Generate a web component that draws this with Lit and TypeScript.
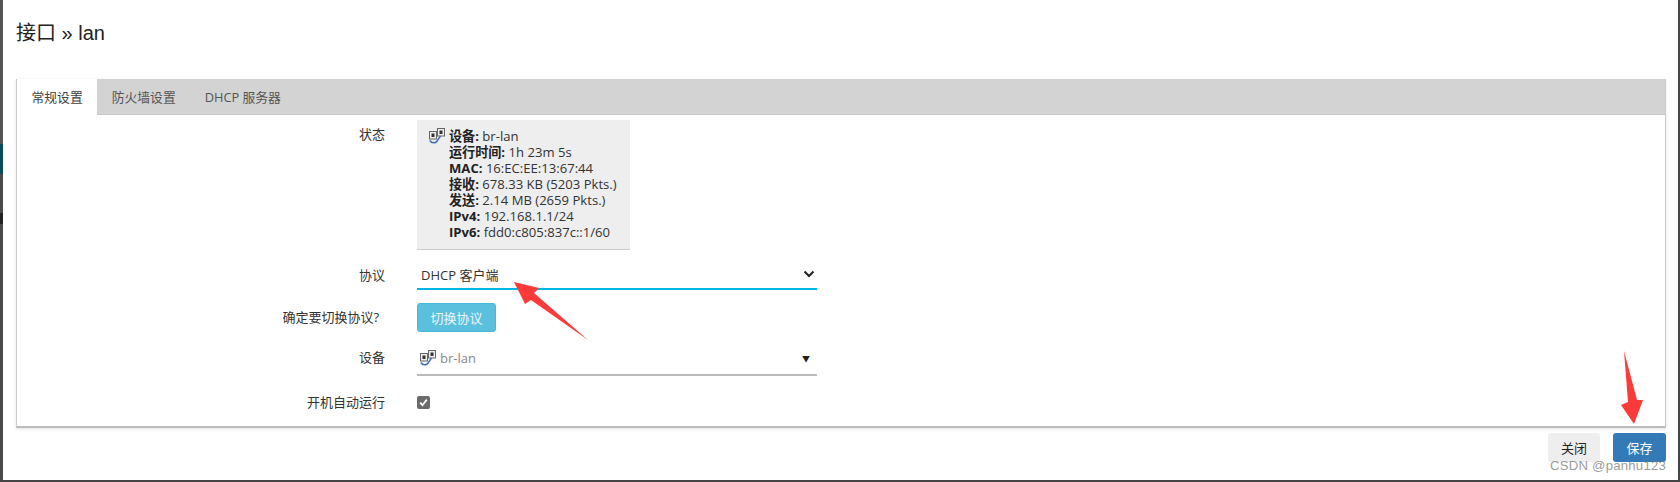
import { LitElement, html, css, svg } from "lit";
import { customElement } from "lit/decorators.js";

const netIcon = (cls: string) => html`<svg class=${cls} viewBox="0 0 16 16" width="16" height="16">
  <rect x="0.5" y="3.5" width="7" height="7.5" fill="#eee" stroke="#666" stroke-width="1"/>
  <rect x="2.5" y="5.5" width="3" height="3.5" fill="#333"/>
  <rect x="8.5" y="0.5" width="7" height="7.5" fill="#eee" stroke="#666" stroke-width="1"/>
  <rect x="10.5" y="2.5" width="3" height="3.5" fill="#333"/>
  <path d="M0.8 12.5 C3 16 7.5 15.5 9 11.5 L11.5 8" fill="none" stroke="#3d6fb4" stroke-width="1.5"/>
</svg>`;

const statusRows: [string, string][] = [
  ["设备:", "br-lan"],
  ["运行时间:", "1h 23m 5s"],
  ["MAC:", "16:EC:EE:13:67:44"],
  ["接收:", "678.33 KB (5203 Pkts.)"],
  ["发送:", "2.14 MB (2659 Pkts.)"],
  ["IPv4:", "192.168.1.1/24"],
  ["IPv6:", "fdd0:c805:837c::1/60"],
];

@customElement("app-root")
export class AppRoot extends LitElement {
  static styles = css`
    :host {
      display: block;
      width: 1680px;
      height: 482px;
      font-family: "Open Sans", "Noto Sans CJK SC", sans-serif;
      font-size: 13px;
      color: #404040;
      background: #fff;
      overflow: hidden;
      position: relative;
    }
    .frame {
      display: flex;
      height: 480px;
      border-bottom: 2px solid #444;
      border-right: 2px solid #444;
    }
    .backdrop {
      width: 3px;
      flex: none;
      background: linear-gradient(
        #555 0 144px,
        #0a4a55 144px 174px,
        #4a4a4a 174px 213px,
        #222 213px 224px,
        #4a4a4a 224px
      );
    }
    .modal {
      flex: 1;
      min-width: 0;
      padding: 0 12px 0 13px;
      display: flex;
      flex-direction: column;
    }
    h3 {
      margin: 0;
      padding-top: 20px;
      height: 59px;
      box-sizing: border-box;
      font-size: 20px;
      line-height: 27px;
      font-weight: 400;
      color: #222;
      font-family: "Liberation Sans", "Noto Sans CJK SC", sans-serif;
    }
    .panel {
      margin-top: 20px;
      height: 349px;
      box-sizing: border-box;
      border: 1px solid #ccc;
      border-bottom: 2px solid #bbb;
      border-top: 0;
      display: flex;
      flex-direction: column;
      box-shadow: 0 1px 3px rgba(0, 0, 0, 0.12);
    }
    .tabs {
      display: flex;
      height: 36px;
      background: #d3d3d3;
      flex: none;
      border-bottom: 1px solid #c8c8c8;
      box-sizing: border-box;
    }
    .tab {
      padding: 0 14.5px;
      line-height: 36px;
      font-size: 12.8px;
      color: #555;
    }
    .tab.active {
      background: #fff;
      color: #404040;
      height: 36px;
    }
    .body {
      display: grid;
      grid-template-columns: 368px 400px;
      column-gap: 32px;
      padding-top: 5px;
    }
    .label {
      text-align: right;
      font-size: 13px;
      color: #333;
    }
    .status {
      background: #eee;
      border-bottom: 1px solid #ccc;
      height: 130px;
      width: 213px;
      padding: 8px 0 0 12px;
      box-sizing: border-box;
      display: flex;
      gap: 4px;
      line-height: 16px;
      font-size: 13.1px;
      color: #333;
    }
    .status b { font-weight: 700; color: #222; }
    .status-icon { flex: none; }
    .lbl-status { line-height: 30px; height: 130px; margin-top: -1px; }
    .lbl-proto { margin-top: 10px; line-height: 30px; height: 30px; }
    .select {
      margin-top: 10px;
      height: 30px;
      box-sizing: border-box;
      border-bottom: 2px solid #00b5e2;
      display: flex;
      align-items: center;
      justify-content: space-between;
      padding: 0 2px 0 4px;
      color: #333;
    }
    .lbl-switch { margin-top: 13px; line-height: 28px; padding-right: 6px; }
    .btn-wrap { margin-top: 13px; }
    .btn {
      display: flex;
      align-items: center;
      justify-content: center;
      border-radius: 3px;
      font-size: 13px;
      box-sizing: border-box;
    }
    .btn-info {
      width: 79px;
      height: 29px;
      background: #5bc0de;
      border: 1px solid #46b8da;
      color: #eaf6fa;
    }
    .lbl-dev { margin-top: 10px; line-height: 30px; }
    .device {
      margin-top: 10px;
      height: 34px;
      box-sizing: border-box;
      border-bottom: 2px solid #bbb;
      display: flex;
      align-items: center;
      padding: 0 7px 0 3px;
      gap: 4px;
      color: #888;
    }
    .device .caret { margin-left: auto; color: #222; font-size: 8px; }
    .lbl-auto { margin-top: 13px; line-height: 26px; }
    .check-row { margin-top: 13px; height: 26px; display: flex; align-items: center; }
    .check {
      width: 13px;
      height: 13px;
      border-radius: 2px;
      background: #6b6b6b;
      display: flex;
      align-items: center;
      justify-content: center;
    }
    .footer {
      display: flex;
      justify-content: flex-end;
      gap: 13px;
      padding-top: 5px;
    }
    .btn-close {
      width: 52px;
      height: 29px;
      background: #eee;
      color: #222;
    }
    .btn-save {
      width: 53px;
      height: 29px;
      background: #337ab7;
      color: #fff;
    }
    .overlay {
      position: absolute;
      left: 0;
      top: 0;
      width: 1680px;
      height: 482px;
      pointer-events: none;
    }
    .mark {
      position: absolute;
      right: 14px;
      bottom: 9px;
      font-family: "Liberation Sans", sans-serif;
      font-size: 13.2px;
      line-height: 14px;
      letter-spacing: 0.2px;
      color: rgba(120, 120, 120, 0.75);
    }
  `;

  render() {
    return html`
      <div class="frame">
        <div class="backdrop"></div>
        <div class="modal">
          <h3>接口 » lan</h3>
          <div class="panel">
            <div class="tabs">
              <div class="tab active">常规设置</div>
              <div class="tab">防火墙设置</div>
              <div class="tab">DHCP 服务器</div>
            </div>
            <div class="body">
              <div class="label lbl-status">状态</div>
              <div class="status">
                ${netIcon("status-icon")}
                <div>
                  ${statusRows.map(([k, v]) => html`<div><b>${k}</b> ${v}</div>`)}
                </div>
              </div>
              <div class="label lbl-proto">协议</div>
              <div class="select">
                <span>DHCP 客户端</span>
                <svg width="12" height="8" viewBox="0 0 12 8"><path d="M1.5 1.5 6 6l4.5-4.5" fill="none" stroke="#222" stroke-width="2"/></svg>
              </div>
              <div class="label lbl-switch">确定要切换协议?</div>
              <div class="btn-wrap"><div class="btn btn-info">切换协议</div></div>
              <div class="label lbl-dev">设备</div>
              <div class="device">
                ${netIcon("")}
                <span>br-lan</span>
                <span class="caret">▼</span>
              </div>
              <div class="label lbl-auto">开机自动运行</div>
              <div class="check-row">
                <div class="check">
                  <svg width="9" height="9" viewBox="0 0 9 9"><path d="M1.2 4.6 3.5 7.2 7.8 1.6" fill="none" stroke="#fff" stroke-width="1.8"/></svg>
                </div>
              </div>
            </div>
          </div>
          <div class="footer">
            <div class="btn btn-close">关闭</div>
            <div class="btn btn-save">保存</div>
          </div>
        </div>
      </div>
      <div class="overlay">
        <svg width="1680" height="482" viewBox="0 0 1680 482">
          ${svg`<polygon fill="#fb3a3a" points="514,282 539,288 534,293 588,340 531,300 525,304"/>
          <polygon fill="#fb3a3a" points="1624,351 1637,400 1643,400 1634,424 1621,405 1628,402"/>`}
        </svg>
        <div class="mark">CSDN @panhu123</div>
      </div>
    `;
  }
}
